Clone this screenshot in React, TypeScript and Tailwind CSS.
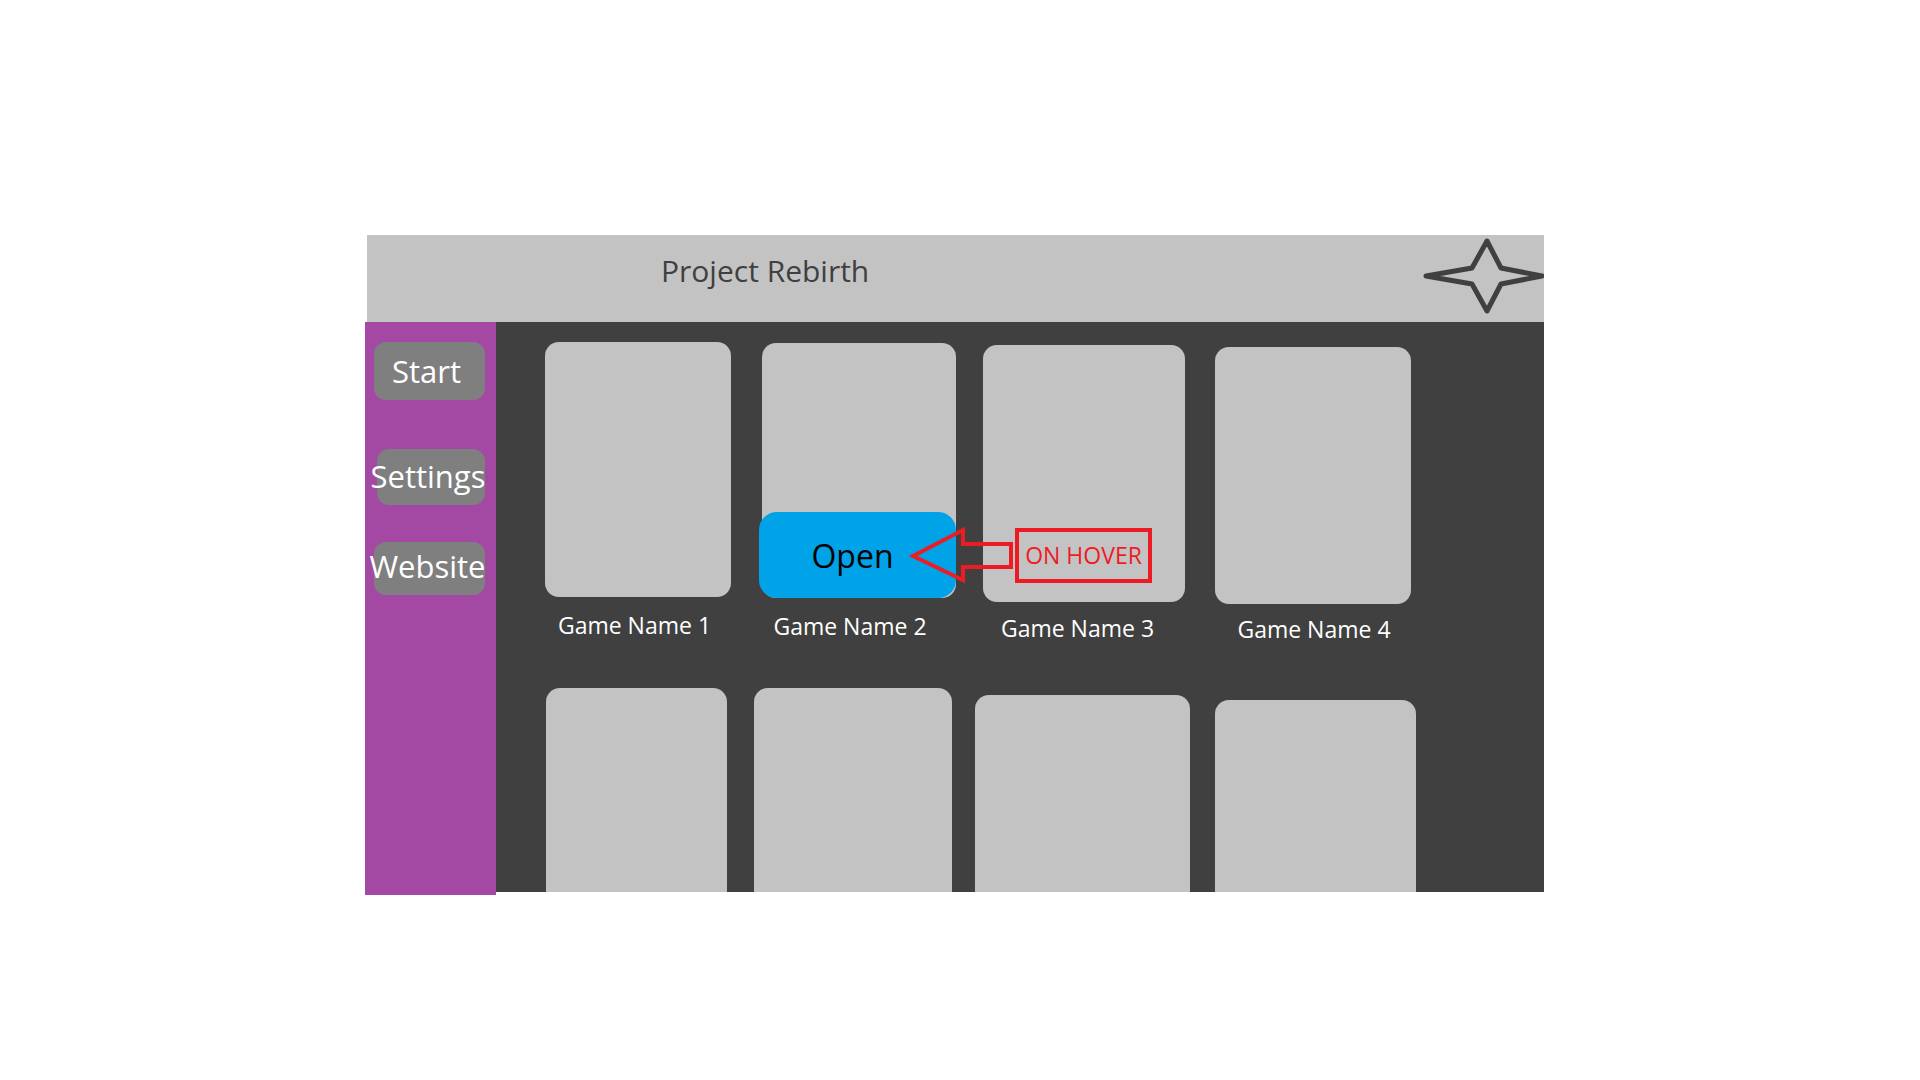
import React from 'react';

const topRow = [
  { name: 'Game Name 1', box: 'ml-[49px] mt-0', card: 'w-[186px] h-[255px]', label: 'mt-[12px] pr-[7px]' },
  { name: 'Game Name 2', box: 'ml-[31px] mt-[1px]', card: 'w-[194px] h-[255px]', label: 'mt-[12px] pr-[18px]' },
  { name: 'Game Name 3', box: 'ml-[27px] mt-[3px]', card: 'w-[202px] h-[257px]', label: 'mt-[10px] pr-[13px]' },
  { name: 'Game Name 4', box: 'ml-[30px] mt-[5px]', card: 'w-[196px] h-[257px]', label: 'mt-[9px] pl-[2px]' },
];

const bottomRow = [
  'ml-[50px] mt-0 w-[181px]',
  'ml-[27px] mt-0 w-[198px]',
  'ml-[23px] mt-[7px] w-[215px]',
  'ml-[25px] mt-[12px] w-[201px]',
];

function Star() {
  return (
    <svg width="126" height="80" viewBox="0 0 126 80" className="mt-[1px] -mr-[2px] shrink-0">
      <polygon
        points="67,5 81,32 122,40 81,48 67,75 52,48 6,40 52,32"
        fill="none"
        stroke="#404040"
        strokeWidth="5"
        strokeLinejoin="round"
      />
    </svg>
  );
}

function HoverArrow() {
  return (
    <svg width="120" height="70" viewBox="0 0 120 70" className="absolute left-[404px] top-[198px] pointer-events-none">
      <polygon
        points="13,36 63,10 63,24 111,24 111,47 63,47 63,60"
        fill="none"
        stroke="#ed1c24"
        strokeWidth="4"
      />
    </svg>
  );
}

export default function App() {
  return (
    <div className="min-h-screen bg-white font-['Open_Sans',sans-serif] pt-[235px] pl-[365px]">
      {/* Title bar */}
      <header className="ml-[2px] w-[1177px] h-[87px] bg-[#c3c3c3] flex items-start overflow-hidden">
        <h1 className="pl-[294px] pt-[16px] text-[30px] leading-[40px] text-[#404040]">Project Rebirth</h1>
        <div className="ml-auto flex">
          <Star />
        </div>
      </header>

      <div className="flex items-start">
        {/* Sidebar */}
        <nav className="w-[131px] h-[573px] bg-[#a349a4] flex flex-col pt-[20px] text-white text-[31px] leading-[40px]">
          <button className="ml-[9px] w-[111px] h-[58px] rounded-[12px] bg-[#7f7f7f] flex items-center justify-center pr-[6px] whitespace-nowrap">
            Start
          </button>
          <button className="ml-[12px] mt-[49px] w-[108px] h-[56px] rounded-[12px] bg-[#7f7f7f] flex items-center justify-center pr-[6px] pb-[2px] whitespace-nowrap">
            Settings
          </button>
          <button className="ml-[9px] mt-[37px] w-[111px] h-[53px] rounded-[12px] bg-[#7f7f7f] flex items-center justify-center pr-[4px] pb-[5px] whitespace-nowrap">
            Website
          </button>
        </nav>

        {/* Game library */}
        <main className="relative w-[1048px] h-[570px] bg-[#404040] overflow-hidden pt-[20px]">
          <div className="flex items-start">
            {topRow.map((g, i) => (
              <div key={g.name} className={`flex flex-col ${g.box}`}>
                <div className={`relative rounded-[14px] bg-[#c3c3c3] ${g.card}`}>
                  {i === 1 && (
                    <div className="absolute -left-[3px] bottom-0 w-[197px] h-[86px] rounded-[18px] bg-[#00a2e8] flex items-center justify-center pr-[10px] pt-[2px] text-[32px] text-black">
                      Open
                    </div>
                  )}
                  {i === 2 && (
                    <div className="absolute left-[32px] top-[183px] w-[137px] h-[55px] border-4 border-[#ed1c24] flex items-center justify-center text-[23px] text-[#ed1c24]">
                      ON HOVER
                    </div>
                  )}
                </div>
                <span className={`text-center text-[23px] leading-[32px] text-white whitespace-nowrap ${g.label}`}>{g.name}</span>
              </div>
            ))}
          </div>

          <div className="flex items-start mt-[43px]">
            {bottomRow.map((c, i) => (
              <div key={i} className={`h-[260px] rounded-t-[14px] bg-[#c3c3c3] ${c}`} />
            ))}
          </div>

          <HoverArrow />
        </main>
      </div>
    </div>
  );
}
